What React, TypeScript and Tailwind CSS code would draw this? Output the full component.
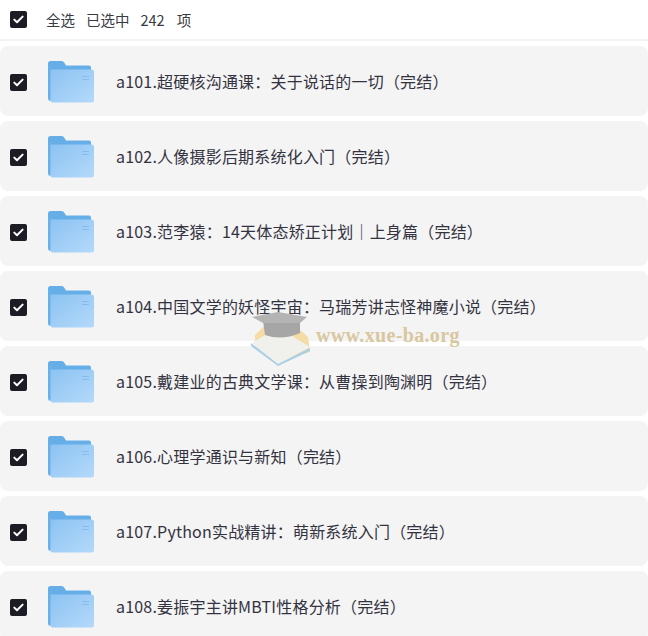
import React from "react";

const items = [
  "a101.超硬核沟通课：关于说话的一切（完结）",
  "a102.人像摄影后期系统化入门（完结）",
  "a103.范李猿：14天体态矫正计划｜上身篇（完结）",
  "a104.中国文学的妖怪宇宙：马瑞芳讲志怪神魔小说（完结）",
  "a105.戴建业的古典文学课：从曹操到陶渊明（完结）",
  "a106.心理学通识与新知（完结）",
  "a107.Python实战精讲：萌新系统入门（完结）",
  "a108.姜振宇主讲MBTI性格分析（完结）",
];

function Check() {
  return (
    <div className="flex h-[17px] w-[17px] shrink-0 items-center justify-center rounded-[2px] bg-[#1c1c24]">
      <svg width="11" height="9" viewBox="0 0 11 9" fill="none">
        <path d="M1.3 4.6 L4 7.2 L9.6 1.6" stroke="#fff" strokeWidth="2" strokeLinecap="round" strokeLinejoin="round" />
      </svg>
    </div>
  );
}

function Folder({ id }: { id: number }) {
  return (
    <svg width="46" height="42" viewBox="0 0 46 42" className="block shrink-0">
      <defs>
        <linearGradient id={`f${id}`} x1="0" y1="0" x2="1" y2="1">
          <stop offset="0" stopColor="#8cc3f2" />
          <stop offset="1" stopColor="#b4d9fa" />
        </linearGradient>
      </defs>
      <path d="M0 2.5 Q0 0 2.5 0 H13.5 Q15.5 0 16.5 2 L18 4.5 H41 Q43 4.5 43 6.5 V12 H0 Z" fill="#66aee8" />
      <path d="M0 6 H3 V39 L1.5 40 Q0 39 0 37 Z" fill="#69afe8" />
      <path d="M2.5 8.5 H43.5 Q46 8.5 46 11 V39 Q46 41.5 43.5 41.5 H4.5 Q2.5 41.5 2.5 39.5 Z" fill={`url(#f${id})`} />
      <rect x="34" y="15" width="7" height="1" fill="#78b5ea" opacity="0.7" />
      <rect x="34" y="18" width="7" height="1" fill="#78b5ea" opacity="0.7" />
    </svg>
  );
}

export default function App() {
  return (
    <div className="relative h-[636px] w-[648px] overflow-hidden bg-white font-['Noto_Sans_CJK_SC','Noto_Sans',sans-serif] text-[#33333f]">
      <div className="flex h-[41px] items-center border-b-2 border-[#f3f3f4] pl-[10px]">
        <Check />
        <div className="ml-[19px] flex items-center text-[14.5px] text-[#3a3a44]">
          <span>全选</span>
          <span className="ml-[11px]">已选中</span>
          <span className="ml-[11px]">242</span>
          <span className="ml-[12px]">项</span>
        </div>
      </div>
      <div className="mt-[5px] flex flex-col gap-[5px]">
        {items.map((t, i) => (
          <div key={t} className="flex h-[70px] shrink-0 items-center rounded-[8px] bg-[#f4f4f5] pl-[10px]">
            <div className="mt-[2px]">
              <Check />
            </div>
            <div className="ml-[21px] mt-[2px]">
              <Folder id={i} />
            </div>
            <div className="ml-[22px] text-[16px] leading-[24px] tracking-[0.2px] text-[#33333f]">{t}</div>
          </div>
        ))}
      </div>
      <div className="absolute left-[250px] top-[310px] flex items-center">
        <svg width="60" height="56" viewBox="0 0 60 56" className="shrink-0">
          <path d="M5 25 L13 17 L50 20 L58 27 L60 42 L30 50 L5 33 Z" fill="#f5dca6" />
          <path d="M2 33 L22 21 L42 26 L60 37 L28 54 Z" fill="#f0f0ec" />
          <path d="M1 33 L28 54 L60 38 L60 41 L28 56 L1 36 Z" fill="#a9cfe3" />
          <path d="M13 11 L50 11 L50 23 Q32 31 15 25 Z" fill="#a6a6a6" />
          <path d="M2 7 L28 2 L57 7 L50 13 L13 13 Z" fill="#b4b4b4" />
        </svg>
        <span className="ml-[6px] mt-[-6px] font-['Liberation_Serif',serif] text-[20px] font-bold tracking-[0.35px] text-[#d9c7a0]">www.xue-ba.org</span>
      </div>
    </div>
  );
}
